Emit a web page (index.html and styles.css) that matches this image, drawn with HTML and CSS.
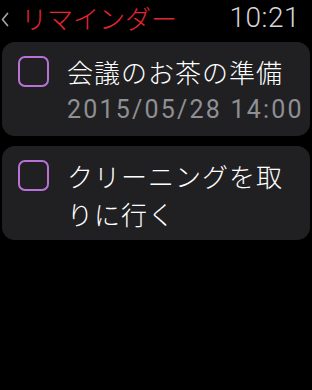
FILE: index.html
```html
<!DOCTYPE html>
<html lang="ja">
<head>
  <meta charset="UTF-8">
  <title>リマインダー</title>
  <link rel="stylesheet" href="styles.css">
</head>
<body>
  <header class="topbar">
    <div class="back">
      <svg class="chevron" width="8" height="15" viewBox="0 0 8 15">
        <polyline points="6.5,1.5 1.5,7.5 6.5,13.5" fill="none" stroke="#a3a3a8" stroke-width="1.7" stroke-linecap="round" stroke-linejoin="round"/>
      </svg>
      <span class="title">リマインダー</span>
    </div>
    <span class="clock">10:21</span>
  </header>

  <div class="list">
    <div class="item">
      <span class="check"></span>
      <div class="body">
        <div class="name">会議のお茶の準備</div>
        <div class="due">2015/05/28 14:00</div>
      </div>
    </div>
    <div class="item">
      <span class="check"></span>
      <div class="body">
        <div class="name">クリーニングを取りに行く</div>
      </div>
    </div>
  </div>
</body>
</html>
```

FILE: styles.css
```css
body {
  margin: 0;
  background: #000;
  color: #fff;
  font-family: Roboto, "Noto Sans CJK JP", sans-serif;
}
.topbar {
  height: 36px;
  display: flex;
  align-items: center;
  justify-content: space-between;
  padding: 0 12px 0 1px;
}
.back {
  display: flex;
  align-items: center;
  gap: 12px;
}
.chevron {
  display: block;
  margin-top: 2px;
}
.title {
  color: #e3262f;
  font-family: "Noto Sans CJK JP", sans-serif;
  font-size: 26px;
  font-weight: 300;
  line-height: 36px;
}
.clock {
  color: #d6d6da;
  font-size: 28px;
  font-weight: 300;
  line-height: 36px;
  letter-spacing: 0.5px;
}
.list {
  display: flex;
  flex-direction: column;
  gap: 10px;
  padding: 6px 2px 0 2px;
}
.item {
  background: #202022;
  border-radius: 13px;
  display: flex;
  align-items: flex-start;
  gap: 18px;
  padding: 11px 6px 7px 16px;
}
.check {
  flex: none;
  width: 27px;
  height: 27px;
  border: 2px solid #b872d6;
  border-radius: 7px;
  margin-top: 3px;
}
.body {
  flex: 1;
  min-width: 0;
}
.name {
  font-family: "Noto Sans CJK JP", sans-serif;
  font-size: 26px;
  font-weight: 300;
  line-height: 38px;
  letter-spacing: 1px;
}
.due {
  color: #8f8f94;
  font-size: 25px;
  line-height: 38px;
  letter-spacing: 2.2px;
  white-space: nowrap;
}
```
